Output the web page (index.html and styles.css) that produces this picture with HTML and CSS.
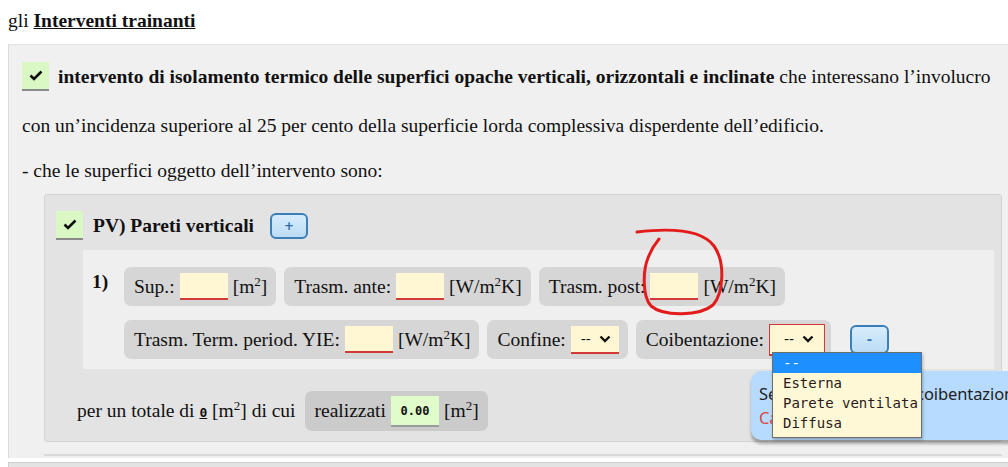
FILE: index.html
```html
<!DOCTYPE html>
<html lang="it">
<head>
    <meta charset="UTF-8">
    <meta name="viewport" content="width=device-width, initial-scale=1.0">
    <title>Interventi trainanti</title>
    <link rel="stylesheet" href="styles.css">
</head>
<body>
    <div class="title">gli <u><b>Interventi trainanti</b></u></div>

    <div class="panel">
        <div class="line first">
            <span class="check"><svg width="14" height="11" viewBox="0 0 14 11"><polyline points="1.5,5.5 5,9 12.5,1.5" fill="none" stroke="#111" stroke-width="2.6"/></svg></span>
            <span><b>intervento di isolamento termico delle superfici opache verticali, orizzontali e inclinate</b> che interessano l’involucro</span>
        </div>
        <p class="line second">con un’incidenza superiore al 25 per cento della superficie lorda complessiva disperdente dell’edificio.</p>
        <p class="line third">- che le superfici oggetto dell’intervento sono:</p>

        <div class="sub">
            <div class="sub-head">
                <span class="check"><svg width="14" height="11" viewBox="0 0 14 11"><polyline points="1.5,5.5 5,9 12.5,1.5" fill="none" stroke="#111" stroke-width="2.6"/></svg></span>
                <b>PV) Pareti verticali</b>
                <span class="btn plus">+</span>
            </div>

            <div class="items">
                <div class="num">1)</div>
                <div class="rows">
                    <div class="row">
                        <span class="chip"><span>Sup.:</span><span class="inp"></span><span>[m<sup>2</sup>]</span></span>
                        <span class="chip"><span>Trasm. ante:</span><span class="inp"></span><span>[W/m<sup>2</sup>K]</span></span>
                        <span class="chip"><span>Trasm. post:</span><span class="inp"></span><span>[W/m<sup>2</sup>K]</span></span>
                    </div>
                    <div class="row">
                        <span class="chip"><span>Trasm. Term. period. YIE:</span><span class="inp"></span><span>[W/m<sup>2</sup>K]</span></span>
                        <span class="chip"><span>Confine:</span><span class="sel">-- <svg width="12" height="8" viewBox="0 0 12 8"><polyline points="1.5,1.5 6,6 10.5,1.5" fill="none" stroke="#111" stroke-width="2.4"/></svg></span></span>
                        <span class="chip narrow"><span>Coibentazione:</span><span class="sel focus">-- <svg width="12" height="8" viewBox="0 0 12 8"><polyline points="1.5,1.5 6,6 10.5,1.5" fill="none" stroke="#111" stroke-width="2.4"/></svg></span></span>
                        <span class="btn minus">-</span>
                    </div>
                </div>
            </div>

            <div class="total">
                <span>per un totale di <u class="zero">0</u> [m<sup>2</sup>] di cui</span>
                <span class="chip dark"><span>realizzati</span><span class="inp ok">0.00</span><span>[m<sup>2</sup>]</span></span>
            </div>
        </div>

        <div class="rule"></div>
    </div>

    <div class="next"></div>

    <div class="tip">
        <div>Selezionare il tipo di coibentazione</div>
        <div class="tip-err">Campo obbligatorio</div>
    </div>

    <ul class="dropdown">
        <li class="active">--</li>
        <li>Esterna</li>
        <li>Parete ventilata</li>
        <li>Diffusa</li>
    </ul>

    <svg class="mark" width="1008" height="467" viewBox="0 0 1008 467">
        <path d="M637 232 C662 229, 700 227, 714 246 C726 263, 723 294, 713 305 C700 316, 664 317, 651 306 C642 296, 643 270, 648 258 C651 250, 654 245, 659 239" fill="none" stroke="#e31b1b" stroke-width="3" stroke-linecap="round"/>
    </svg>
</body>
</html>
```

FILE: styles.css
```css
body {
    font-family: 'Liberation Serif', 'Times New Roman', serif;
    font-size: 19.5px;
    color: #111;
    margin: 0;
    padding: 0;
    background-color: #ffffff;
    overflow: hidden;
    position: relative;
    height: 467px;
}

sup {
    font-size: 13px;
    line-height: 0;
    vertical-align: 7px;
}

.title {
    margin: 8px 8px 0;
    line-height: 26px;
}

.panel {
    margin: 10px 0 0 8px;
    padding: 17px 0 2px 13px;
    background-color: #f0f0f0;
    border-left: 1px solid #dcdcdc;
    border-top: 1px solid #e2e2e2;
}

.line {
    margin: 0;
    line-height: 28px;
    white-space: nowrap;
}

.first {
    display: flex;
    align-items: center;
    gap: 9px;
}

.second {
    margin-top: 21px;
}

.third {
    margin-top: 17px;
}

.check {
    display: inline-flex;
    align-items: center;
    justify-content: center;
    width: 27px;
    height: 27px;
    background-color: #d9f8c4;
    border-bottom: 2px solid #8a8a8a;
    flex-shrink: 0;
}

.sub {
    margin: 9px 6px 0 22px;
    padding: 16px 7px 10px 11px;
    background-color: #e3e3e3;
    border: 1px solid #d3d3d3;
    border-radius: 3px;
}

.sub-head {
    display: flex;
    align-items: center;
    height: 29px;
    gap: 10px;
}

.btn {
    display: inline-flex;
    align-items: center;
    justify-content: center;
    font-family: 'DejaVu Sans', sans-serif;
    font-weight: bold;
    color: #2f6fae;
    background: linear-gradient(#d6ecfc, #bcdcf4);
    border: 2px solid #3a7fb8;
    border-radius: 6px;
    box-sizing: border-box;
}

.plus {
    width: 38px;
    height: 26px;
    margin-left: 6px;
    font-size: 12px;
}

.minus {
    width: 39px;
    height: 29px;
    margin-left: 11px;
    font-size: 13px;
}

.items {
    display: flex;
    margin: 10px 0 0 27px;
    padding: 17px 0 10px 9px;
    background-color: #efefef;
}

.num {
    width: 32px;
    font-weight: bold;
    line-height: 30px;
}

.rows {
    display: flex;
    flex-direction: column;
    gap: 14px;
}

.row {
    display: flex;
    align-items: center;
    gap: 8px;
}

.chip {
    display: inline-flex;
    align-items: center;
    gap: 5px;
    height: 39px;
    padding: 0 9px 0 10px;
    background-color: #d6d6d6;
    border-radius: 7px;
    white-space: nowrap;
}

.narrow {
    padding-right: 6px;
}

.inp {
    display: inline-block;
    width: 48px;
    height: 25px;
    background-color: #fff7d4;
    border-bottom: 2px solid #d23a3a;
}

.sel {
    display: inline-flex;
    align-items: center;
    gap: 8px;
    height: 26px;
    padding: 0 8px 0 10px;
    font-family: 'DejaVu Sans', sans-serif;
    font-size: 14px;
    background-color: #fff7d4;
    border-bottom: 2px solid #d23a3a;
}

.focus {
    height: 32px;
    padding: 0 10px 0 14px;
    border: 1px solid #d23a3a;
    border-bottom-width: 2px;
    box-sizing: border-box;
}

.total {
    display: flex;
    align-items: center;
    gap: 5px;
    margin-top: 22px;
    padding-left: 21px;
    white-space: nowrap;
}

.zero {
    font-family: 'DejaVu Sans Mono', monospace;
    font-weight: bold;
    font-size: 13px;
}

.dark {
    height: 40px;
    margin-left: 4px;
    background-color: #cbcbcb;
}

.ok {
    width: 48px;
    height: 29px;
    line-height: 30px;
    text-align: center;
    font-family: 'DejaVu Sans Mono', monospace;
    font-weight: bold;
    font-size: 12px;
    background-color: #e1fccb;
    border-bottom: 2px solid #9a9a9a;
}

.rule {
    margin: 12px 6px 0 22px;
    height: 2px;
    background-color: #d9d9d9;
}

.next {
    margin: 4px 0 0 8px;
    height: 20px;
    background-color: #e3e3e3;
    border-top: 1px solid #d0d0d0;
    border-left: 1px solid #d0d0d0;
}

.tip {
    position: absolute;
    left: 751px;
    top: 371px;
    width: 300px;
    height: 69px;
    box-sizing: border-box;
    padding: 11px 8px;
    font-family: 'Noto Sans', sans-serif;
    font-size: 16.5px;
    letter-spacing: -0.1px;
    line-height: 24px;
    color: #222;
    background-color: #b7dbff;
    border-radius: 10px;
    box-shadow: 0 4px 3px rgba(0, 0, 0, 0.3);
    white-space: nowrap;
}

.tip-err {
    color: #d84848;
}

.dropdown {
    position: absolute;
    left: 772px;
    top: 352px;
    width: 148px;
    margin: 0;
    padding: 0 0 4px;
    list-style: none;
    font-family: 'DejaVu Sans Mono', monospace;
    font-size: 14px;
    line-height: 20px;
    color: #2a1a1a;
    background-color: #fff8d6;
    border: 1px solid #6e6e6e;
    box-shadow: 1px 2px 3px rgba(0, 0, 0, 0.25);
}

.dropdown li {
    padding-left: 10px;
}

.dropdown .active {
    color: #ffffff;
    background-color: #1e8fff;
}

.mark {
    position: absolute;
    left: 0;
    top: 0;
    pointer-events: none;
}
```
